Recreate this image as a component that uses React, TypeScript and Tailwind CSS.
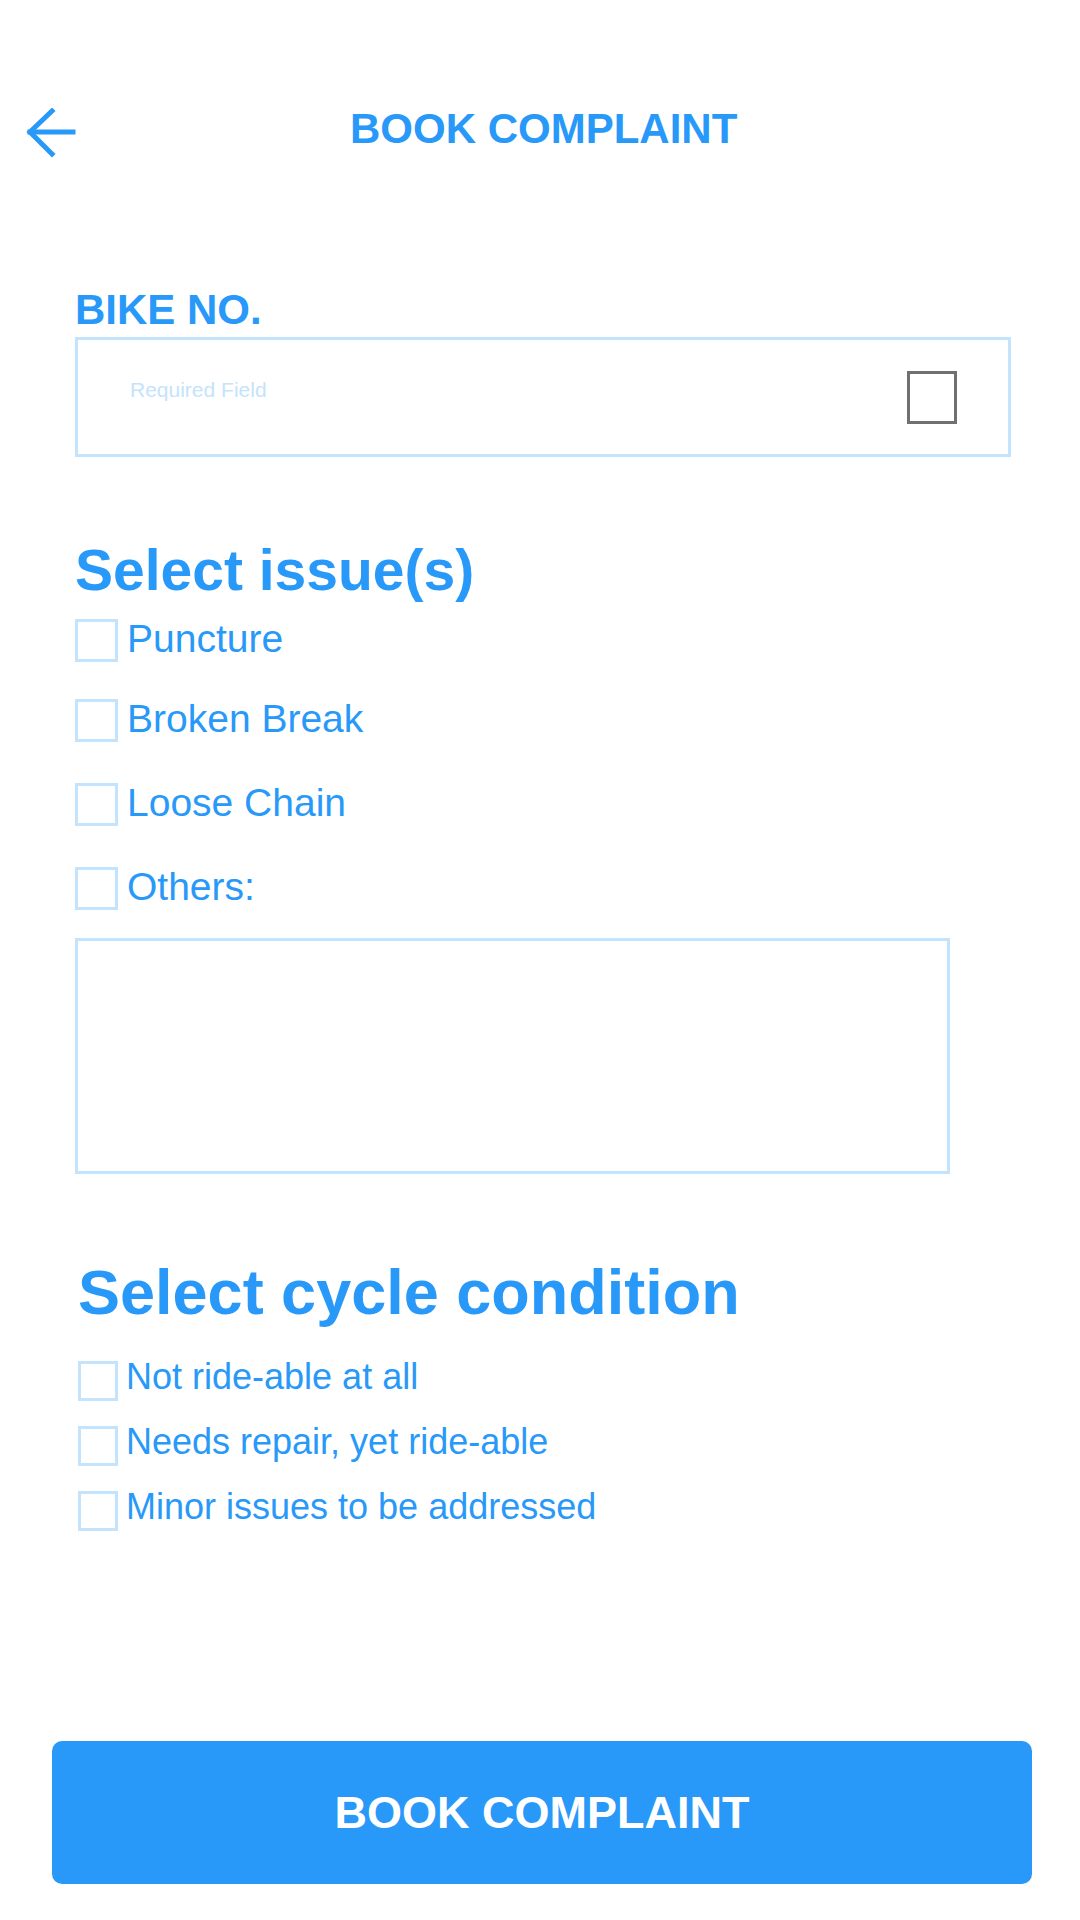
import React from "react";

const issues = [
  { label: "Puncture", gap: "mt-[20px]" },
  { label: "Broken Break", gap: "mt-[37px]" },
  { label: "Loose Chain", gap: "mt-[41px]" },
  { label: "Others:", gap: "mt-[41px]" },
];

const conditions = ["Not ride-able at all", "Needs repair, yet ride-able", "Minor issues to be addressed"];

const BackArrow = () => (
  <svg width="50" height="50" viewBox="0 0 50 50" fill="none" stroke="#2899f9" strokeWidth="5" strokeLinecap="square">
    <path d="M4 24 H47" />
    <path d="M26 3 L4 24 L26 46" strokeLinejoin="miter" />
  </svg>
);

const IssueRow = ({ label, gap }: { label: string; gap: string }) => (
  <label className={`flex items-start gap-[9px] ${gap}`}>
    <span className="block h-[43px] w-[43px] shrink-0 border-[3px] border-[#c4e3fc]" />
    <span className="text-[39px] leading-none text-[#2899f9]">{label}</span>
  </label>
);

const ConditionRow = ({ label }: { label: string }) => (
  <label className="flex items-start gap-[8px]">
    <span className="mt-[2px] block h-[40px] w-[40px] shrink-0 border-[3px] border-[#c4e3fc]" />
    <span className="text-[36px] leading-none text-[#2899f9]">{label}</span>
  </label>
);

export default function App() {
  return (
    <div className="h-[1920px] w-[1080px] overflow-hidden bg-white font-['Liberation_Sans',Arial,sans-serif]">
      {/* header */}
      <div className="mt-[108px] flex h-[50px] items-start">
        <div className="ml-[26px]">
          <BackArrow />
        </div>
        <h1 className="ml-[274px] text-[42px] font-bold leading-none text-[#2899f9]">BOOK COMPLAINT</h1>
      </div>

      <div className="pl-[75px]">
        <p className="mt-[131px] text-[42px] font-bold leading-none text-[#2899f9]">BIKE NO.</p>
        <div className="mt-[6px] flex h-[120px] w-[936px] items-start justify-between border-[3px] border-[#c4e3fc] pl-[52px] pr-[51px]">
          <span className="mt-[39px] text-[21px] leading-none text-[#c4e3fc]">Required Field</span>
          <span className="mt-[31px] block h-[53px] w-[50px] border-[3px] border-[#707070]" />
        </div>

        <h2 className="mt-[85px] text-[57px] font-bold leading-none text-[#2899f9]">Select issue(s)</h2>
        {issues.map((i) => (
          <IssueRow key={i.label} label={i.label} gap={i.gap} />
        ))}
        <div className="mt-[28px] h-[236px] w-[875px] border-[3px] border-[#c4e3fc]" />

        <h2 className="ml-[3px] mt-[87px] text-[63px] font-bold leading-none text-[#2899f9]">Select cycle condition</h2>
        <div className="ml-[3px] mt-[35px] flex flex-col gap-[23px]">
          {conditions.map((c) => (
            <ConditionRow key={c} label={c} />
          ))}
        </div>
      </div>

      <div className="pl-[52px]">
        <button className="mt-[210px] flex h-[143px] w-[980px] items-center justify-center rounded-[10px] bg-[#2898f9] text-[45px] font-bold leading-none text-white">
          BOOK COMPLAINT
        </button>
      </div>
    </div>
  );
}
